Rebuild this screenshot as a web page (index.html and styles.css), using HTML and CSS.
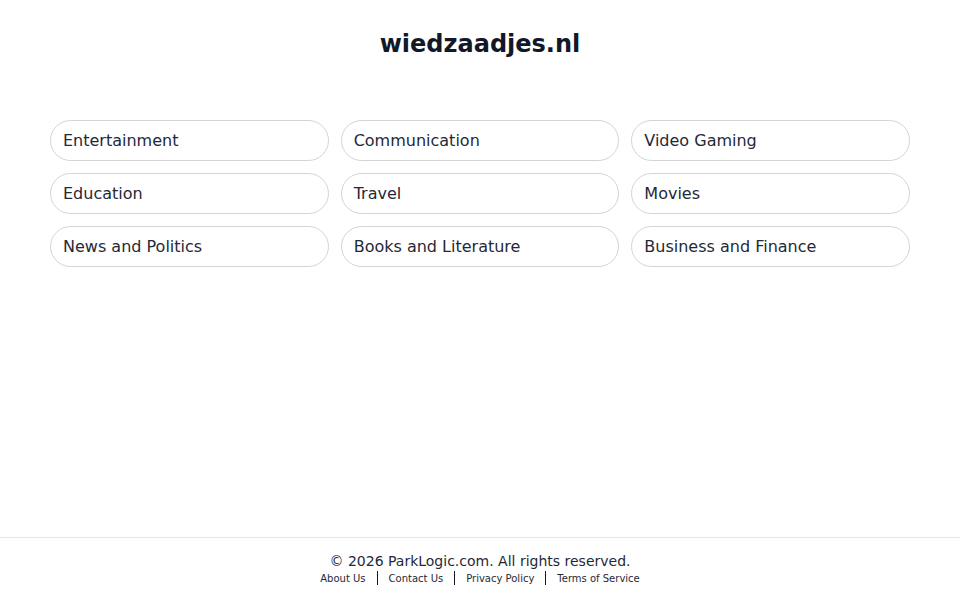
FILE: index.html
```html
<!DOCTYPE html>
<html lang="en">
<head>
    <meta charset="UTF-8">
    <meta name="viewport" content="width=device-width, initial-scale=1.0">
    <title>wiedzaadjes.nl</title>
    <link rel="stylesheet" href="styles.css">
</head>
<body>
    <div class="page">
        <!-- Header -->
        <header class="site-header">
            <h1>wiedzaadjes.nl</h1>
        </header>

        <!-- Category links -->
        <main class="content">
            <div class="topics">
                <a class="topic" href="#">Entertainment</a>
                <a class="topic" href="#">Communication</a>
                <a class="topic" href="#">Video Gaming</a>
                <a class="topic" href="#">Education</a>
                <a class="topic" href="#">Travel</a>
                <a class="topic" href="#">Movies</a>
                <a class="topic" href="#">News and Politics</a>
                <a class="topic" href="#">Books and Literature</a>
                <a class="topic" href="#">Business and Finance</a>
            </div>
        </main>

        <!-- Footer -->
        <footer class="site-footer">
            <p class="copyright">&copy; 2026 ParkLogic.com. All rights reserved.</p>
            <nav class="footer-links">
                <a href="#">About Us</a>
                <span class="sep"></span>
                <a href="#">Contact Us</a>
                <span class="sep"></span>
                <a href="#">Privacy Policy</a>
                <span class="sep"></span>
                <a href="#">Terms of Service</a>
            </nav>
        </footer>
    </div>
</body>
</html>
```

FILE: styles.css
```css
body {
    font-family: 'DejaVu Sans', 'Liberation Sans', sans-serif;
    margin: 0;
    padding: 0;
    background: #ffffff;
    color: #1f2937;
}

.page {
    display: flex;
    flex-direction: column;
    min-height: 100vh;
}

/* Header */
.site-header {
    padding-top: 28px;
    text-align: center;
}

.site-header h1 {
    margin: 0;
    font-size: 24px;
    line-height: 32px;
    font-weight: bold;
    color: #111827;
}

/* Topic pills */
.content {
    flex: 1;
    padding: 60px 50px 0;
}

.topics {
    display: grid;
    grid-template-columns: repeat(3, 1fr);
    gap: 12px;
}

.topic {
    display: block;
    padding: 10px 12px;
    font-size: 16px;
    line-height: 19px;
    color: #1f2937;
    text-decoration: none;
    border: 1px solid #d4d4d8;
    border-radius: 9999px;
    background: #ffffff;
}

/* Footer */
.site-footer {
    border-top: 1px solid #e5e7eb;
    padding: 13px 0 15px;
    text-align: center;
}

.copyright {
    margin: 0;
    font-size: 14px;
    line-height: 20px;
    color: #1f2937;
}

.footer-links {
    display: flex;
    justify-content: center;
    align-items: center;
    height: 14px;
    font-size: 10px;
}

.footer-links a {
    color: #1f2937;
    text-decoration: none;
}

.footer-links .sep {
    display: inline-block;
    width: 0;
    height: 14px;
    border-left: 1px solid #111827;
    margin: 0 11px;
}
```
